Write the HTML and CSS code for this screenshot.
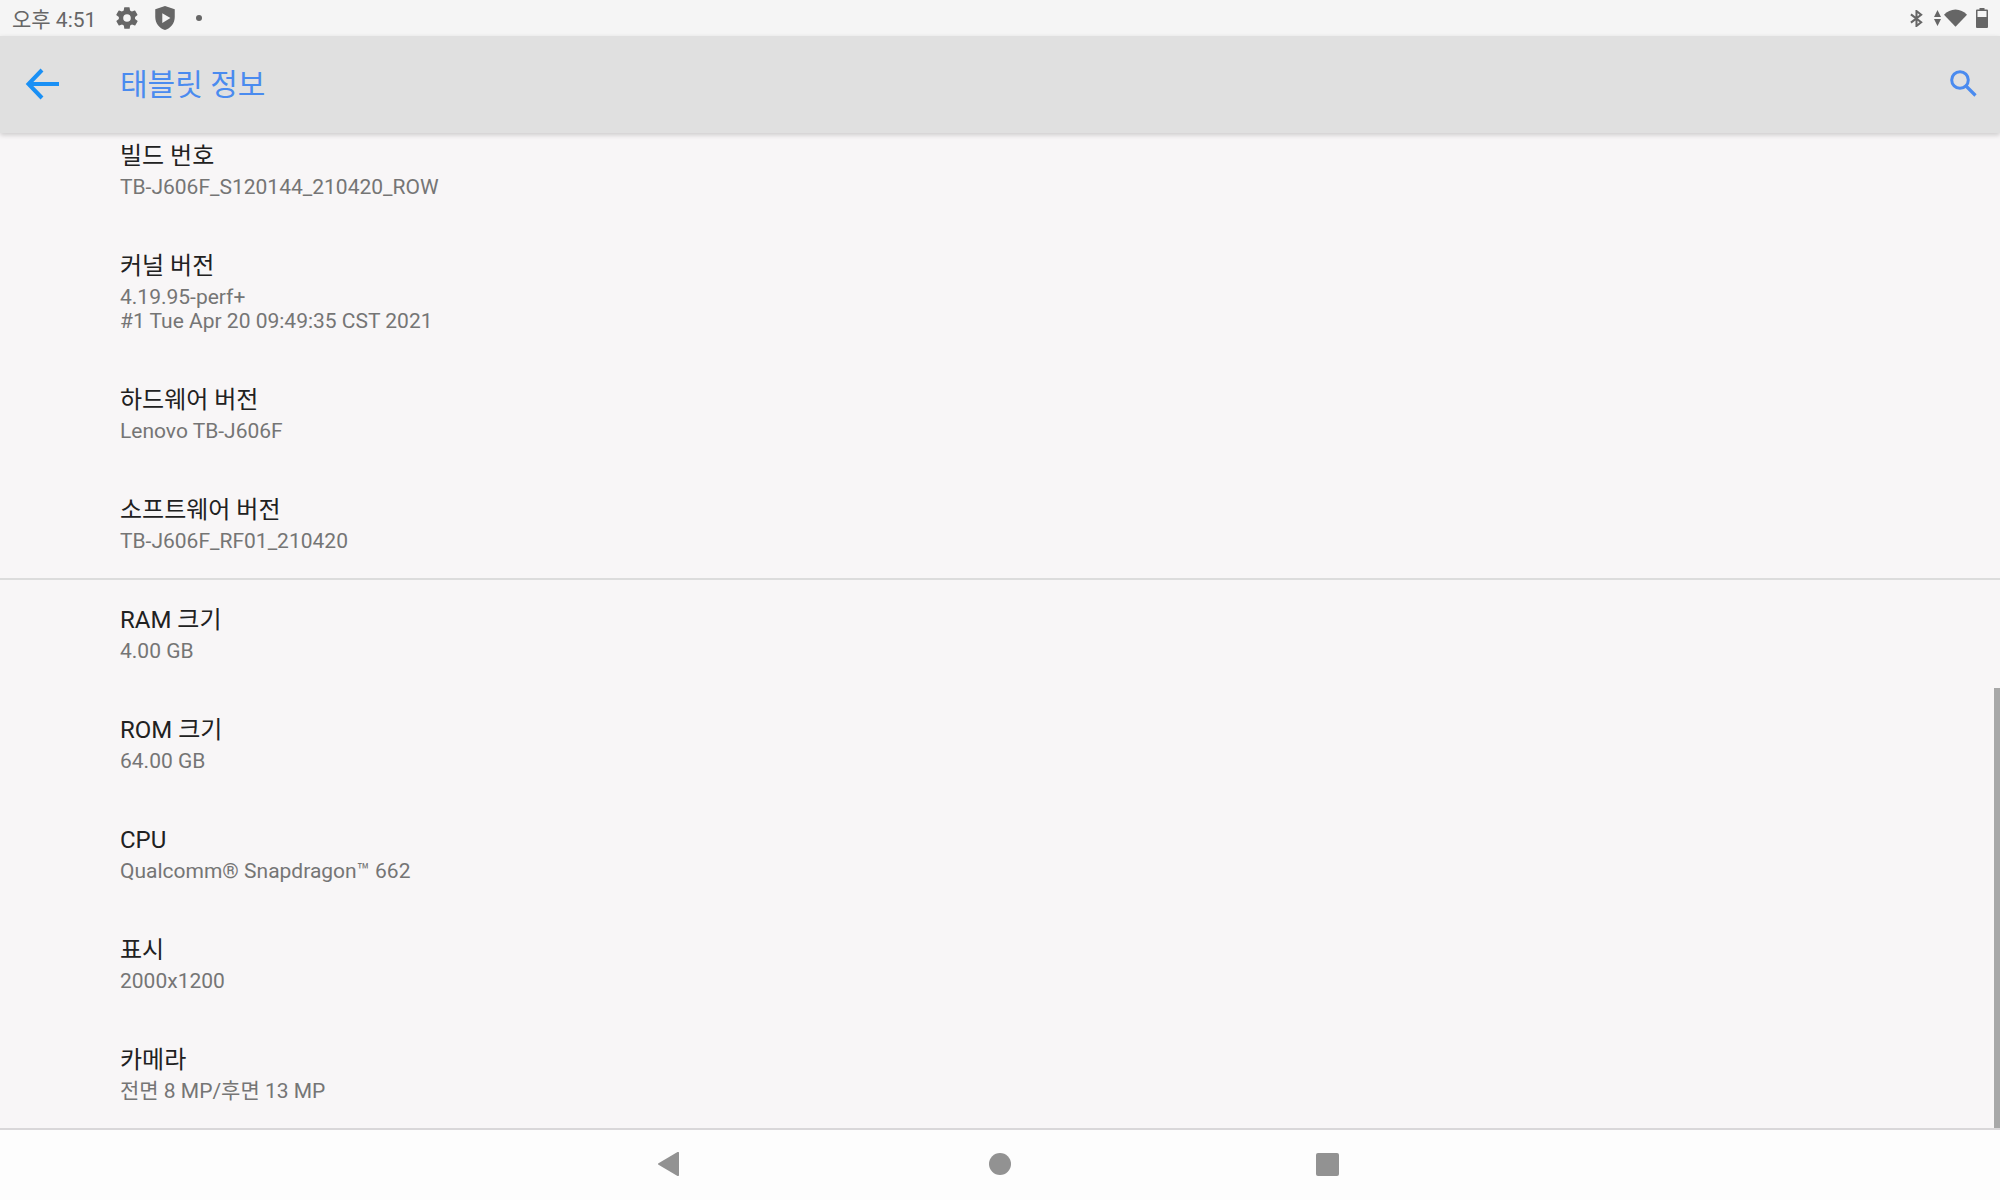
FILE: index.html
```html
<!DOCTYPE html>
<html lang="ko">
<head>
    <meta charset="UTF-8">
    <meta name="viewport" content="width=device-width, initial-scale=1.0">
    <title>태블릿 정보</title>
    <link rel="stylesheet" href="styles.css">
</head>
<body>

<div class="tablet">
    <!-- Status bar -->
    <div class="status-bar">
        <div class="status-left">
            <span class="clock">오후 4:51</span>
            <svg class="gear" viewBox="0 0 24 24"><path d="M19.4 13a7.5 7.5 0 0 0 0-2l2.1-1.6a.5.5 0 0 0 .1-.6l-2-3.5a.5.5 0 0 0-.6-.2l-2.5 1a7.3 7.3 0 0 0-1.7-1L14.4 2.400a.5.5 0 0 0-.5-.4h-4a.5.5 0 0 0-.5.4L9 5.100a7.300 7.300 0 0 0-1.700 1l-2.500-1a.5.500 0 0 0-.6.2l-2 3.500a.5.500 0 0 0 .1.600L4.500 11a7.500 7.500 0 0 0 0 2l-2.100 1.600a.5.500 0 0 0-.1.600l2 3.500a.5.500 0 0 0 .6.200l2.500-1a7.300 7.300 0 0 0 1.700 1l.4 2.700a.5.500 0 0 0 .5.400h4a.5.500 0 0 0 .5-.4l.4-2.700a7.300 7.300 0 0 0 1.700-1l2.500 1a.5.500 0 0 0 .6-.2l2-3.500a.5.500 0 0 0-.1-.6zM12 15.500a3.500 3.500 0 1 1 0-7 3.500 3.500 0 0 1 0 7z"/></svg>
            <svg class="shield" viewBox="0 0 24 24"><path fill-rule="evenodd" d="M12 1 3 4v7c0 5.600 3.800 10.700 9 12 5.200-1.300 9-6.400 9-12V4zM9.500 7.500l7.500 4.500-7.500 4.500z"/></svg>
            <span class="dot"></span>
        </div>
        <div class="status-right">
            <svg class="bluetooth" viewBox="0 0 14 18"><path fill="none" stroke="#666" stroke-width="2.200" d="M1 4.500 12 13 7 17V1L12 5 1 13.500"/></svg>
            <svg class="updown" viewBox="0 0 7 16"><path d="M3.500 0 7 7H0zM3.500 16 0 9h7z"/></svg>
            <svg class="wifi" viewBox="0 0 24 18"><path d="M12 18 0 5.500C3.200 2.200 7.400 0 12 0s8.800 2.200 12 5.500z"/></svg>
            <svg class="battery" viewBox="0 0 12 20"><path d="M3.500 0h5v1.500H11a1 1 0 0 1 1 1V19a1 1 0 0 1-1 1H1a1 1 0 0 1-1-1V2.500a1 1 0 0 1 1-1h2.500z"/><rect class="battery-empty" x="1.500" y="3" width="9" height="6"/></svg>
        </div>
    </div>

    <!-- App bar -->
    <header class="app-bar">
        <svg class="back" viewBox="0 0 36 32"><path fill="none" stroke="#1a90f5" stroke-width="4" d="M34 16H4M17 2 3.500 16 17 30"/></svg>
        <h1>태블릿 정보</h1>
        <svg class="search" viewBox="0 0 28 28"><circle cx="11" cy="11" r="8.300" fill="none" stroke="#4a8bef" stroke-width="3"/><path stroke="#4a8bef" stroke-width="3.200" d="M17 17 26.500 26.500"/></svg>
    </header>

    <main class="content">
        <div class="list">
            <div class="row"><div class="name">빌드 번호</div><div class="value">TB-J606F_S120144_210420_ROW</div></div>
            <div class="row"><div class="name">커널 버전</div><div class="value">4.19.95-perf+<br>#1 Tue Apr 20 09:49:35 CST 2021</div></div>
            <div class="row"><div class="name">하드웨어 버전</div><div class="value">Lenovo TB-J606F</div></div>
            <div class="row"><div class="name">소프트웨어 버전</div><div class="value">TB-J606F_RF01_210420</div></div>
            <hr class="divider">
            <div class="row"><div class="name">RAM 크기</div><div class="value">4.00 GB</div></div>
            <div class="row"><div class="name">ROM 크기</div><div class="value">64.00 GB</div></div>
            <div class="row"><div class="name">CPU</div><div class="value">Qualcomm® Snapdragon™ 662</div></div>
            <div class="row"><div class="name">표시</div><div class="value">2000x1200</div></div>
            <div class="row"><div class="name">카메라</div><div class="value">전면 8 MP/후면 13 MP</div></div>
        </div>
        <div class="scrollbar"></div>
    </main>

    <!-- Navigation bar -->
    <footer class="nav-bar">
        <svg class="nav-back" viewBox="0 0 21 24"><path d="M19.500 0a1 1 0 0 1 1.500 1v22a1 1 0 0 1-1.500 1L.5 12.800a1 1 0 0 1 0-1.600z"/></svg>
        <span class="nav-home"></span>
        <span class="nav-recent"></span>
    </footer>
</div>

</body>
</html>
```

FILE: styles.css
```css
/* Basic styling */
* {
    box-sizing: border-box;
}

body {
    margin: 0;
    font-family: Roboto, "Noto Sans CJK KR", sans-serif;
    background-color: #f8f6f7;
    color: #212121;
}

.tablet {
    display: flex;
    flex-direction: column;
    width: 2000px;
    height: 1200px;
    overflow: hidden;
}

/* Status bar */
.status-bar {
    flex: 0 0 36px;
    display: flex;
    justify-content: space-between;
    align-items: center;
    padding: 0 12px 0 12px;
    background-color: #f5f5f5;
}

.status-left,
.status-right {
    display: flex;
    align-items: center;
}

.status-left svg,
.status-right svg {
    fill: #666;
}

.clock {
    font-size: 21px;
    color: #666;
    margin-right: 18px;
}

.gear {
    width: 26px;
    height: 26px;
    margin-right: 12px;
}

.shield {
    width: 26px;
    height: 26px;
    margin-right: 18px;
}

.dot {
    width: 6px;
    height: 6px;
    border-radius: 50%;
    background-color: #666;
}

.bluetooth {
    width: 13px;
    height: 17px;
    margin-right: 11px;
}

.updown {
    width: 7px;
    height: 16px;
    margin-right: 3px;
}

.wifi {
    width: 23px;
    height: 18px;
    margin-right: 9px;
}

.battery {
    width: 12px;
    height: 20px;
}

.status-right .battery-empty {
    fill: #f5f5f5;
}

/* App bar */
.app-bar {
    position: relative;
    z-index: 2;
    flex: 0 0 97px;
    display: flex;
    align-items: center;
    padding: 0 23px 3px 25px;
    background-color: #e0e0e0;
    box-shadow: 0 2px 5px rgba(0, 0, 0, 0.18);
}

.back {
    width: 36px;
    height: 32px;
    margin: 2px 59px 0 0;
}

.app-bar h1 {
    flex: 1;
    margin: 0 0 2px;
    font-size: 30px;
    font-weight: 400;
    color: #4a8bef;
}

.search {
    width: 28px;
    height: 28px;
}

/* Settings list */
.content {
    position: relative;
    flex: 1;
    overflow: hidden;
}

.list {
    margin-top: -20px;
}

.row {
    padding: 24px 0 24px 120px;
}

.name {
    font-size: 24px;
    line-height: 38px;
}

.value {
    font-size: 21px;
    line-height: 24px;
    color: #757575;
}

.divider {
    height: 2px;
    margin: 1px 0 -3px;
    border: none;
    background-color: #dcdcdc;
}

.scrollbar {
    position: absolute;
    right: 0;
    bottom: 0;
    width: 6px;
    height: 440px;
    background-color: #a8a8a8;
}

/* Navigation bar */
.nav-bar {
    flex: 0 0 72px;
    display: flex;
    justify-content: center;
    align-items: center;
    gap: 305px;
    padding: 0 3px 2px 0;
    background-color: #fdfdfd;
    border-top: 2px solid #d9d7d9;
}

.nav-back {
    width: 21px;
    height: 24px;
    margin-right: 5px;
    fill: #929292;
}

.nav-home {
    width: 22px;
    height: 22px;
    border-radius: 50%;
    background-color: #929292;
}

.nav-recent {
    width: 23px;
    height: 23px;
    border-radius: 2px;
    background-color: #929292;
}
```
